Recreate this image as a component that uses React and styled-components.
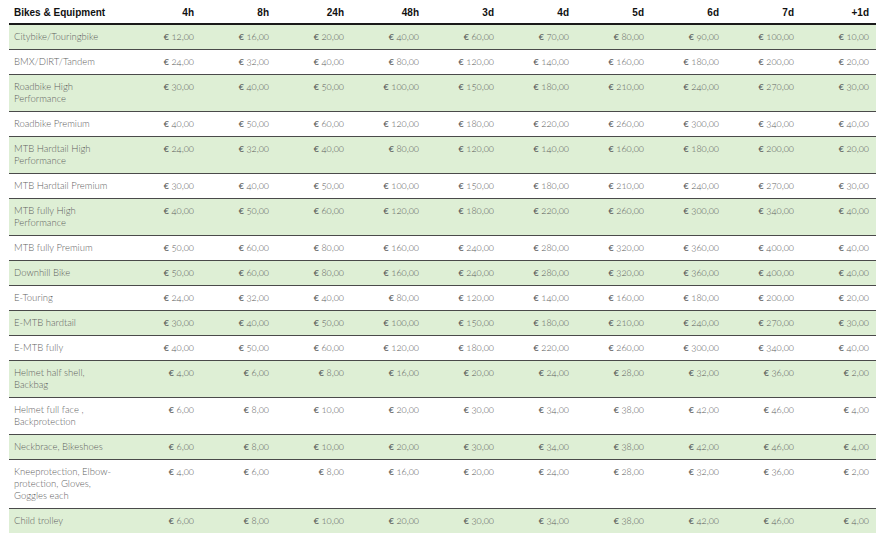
import React from "react";
import styled, { createGlobalStyle } from "styled-components";

const GlobalStyle = createGlobalStyle`
  body {
    margin: 0;
    background: #ffffff;
  }
`;

const Page = styled.div`
  padding: 0 10px 0 9px;
  width: 886px;
  box-sizing: border-box;
`;

const Table = styled.table`
  width: 867px;
  border-collapse: collapse;
  table-layout: fixed;
`;

const HeadCell = styled.th`
  font-family: "Liberation Sans", Arial, sans-serif;
  font-weight: bold;
  font-size: 10px;
  color: #111;
  height: 22px;
  padding: 1px 7px 0 5px;
  text-align: ${(p) => (p.$first ? "left" : "right")};
  vertical-align: middle;
  border-bottom: 2px solid #1a1a1a;
`;

const Row = styled.tr`
  background: ${(p) => (p.$green ? "#deefd5" : "#ffffff")};
  border-bottom: ${(p) => (p.$last ? "none" : "1px solid #4a4a4a")};
`;

const Cell = styled.td`
  font-family: "Lato", "Open Sans", sans-serif;
  font-weight: 300;
  font-size: 9.5px;
  line-height: 12px;
  color: #5f5f5f;
  padding: 6px 7px 6px 5px;
  vertical-align: top;
  text-align: ${(p) => (p.$first ? "left" : "right")};
  font-variant-numeric: oldstyle-nums;
  word-wrap: break-word;
`;

const Euro = styled.span`
  font-weight: 400;
  color: #555;
`;

const cols = ["4h", "8h", "24h", "48h", "3d", "4d", "5d", "6d", "7d", "+1d"];

const rows = [
  ["Citybike/Touringbike", 12, 16, 20, 40, 60, 70, 80, 90, 100, 10],
  ["BMX/DIRT/Tandem", 24, 32, 40, 80, 120, 140, 160, 180, 200, 20],
  ["Roadbike High Performance", 30, 40, 50, 100, 150, 180, 210, 240, 270, 30],
  ["Roadbike Premium", 40, 50, 60, 120, 180, 220, 260, 300, 340, 40],
  ["MTB Hardtail High Performance", 24, 32, 40, 80, 120, 140, 160, 180, 200, 20],
  ["MTB Hardtail Premium", 30, 40, 50, 100, 150, 180, 210, 240, 270, 30],
  ["MTB fully High Performance", 40, 50, 60, 120, 180, 220, 260, 300, 340, 40],
  ["MTB fully Premium", 50, 60, 80, 160, 240, 280, 320, 360, 400, 40],
  ["Downhill Bike", 50, 60, 80, 160, 240, 280, 320, 360, 400, 40],
  ["E-Touring", 24, 32, 40, 80, 120, 140, 160, 180, 200, 20],
  ["E-MTB hardtail", 30, 40, 50, 100, 150, 180, 210, 240, 270, 30],
  ["E-MTB fully", 40, 50, 60, 120, 180, 220, 260, 300, 340, 40],
  ["Helmet half shell, Backbag", 4, 6, 8, 16, 20, 24, 28, 32, 36, 2],
  ["Helmet full face , Backprotection", 6, 8, 10, 20, 30, 34, 38, 42, 46, 4],
  ["Neckbrace, Bikeshoes", 6, 8, 10, 20, 30, 34, 38, 42, 46, 4],
  ["Kneeprotection, Elbow-protection, Gloves, Goggles each", 4, 6, 8, 16, 20, 24, 28, 32, 36, 2],
  ["Child trolley", 6, 8, 10, 20, 30, 34, 38, 42, 46, 4],
];

export default function App() {
  return (
    <Page>
      <GlobalStyle />
      <Table>
        <colgroup>
          <col style={{ width: 117 }} />
          {cols.map((c) => (
            <col key={c} style={{ width: 75 }} />
          ))}
        </colgroup>
        <thead>
          <tr>
            <HeadCell $first>Bikes &amp; Equipment</HeadCell>
            {cols.map((c) => (
              <HeadCell key={c}>{c}</HeadCell>
            ))}
          </tr>
        </thead>
        <tbody>
          {rows.map(([name, ...prices], i) => (
            <Row key={name} $green={i % 2 === 0} $last={i === rows.length - 1}>
              <Cell $first>{name}</Cell>
              {prices.map((p, j) => (
                <Cell key={j}>
                  <Euro>€</Euro> {p},00
                </Cell>
              ))}
            </Row>
          ))}
        </tbody>
      </Table>
    </Page>
  );
}
